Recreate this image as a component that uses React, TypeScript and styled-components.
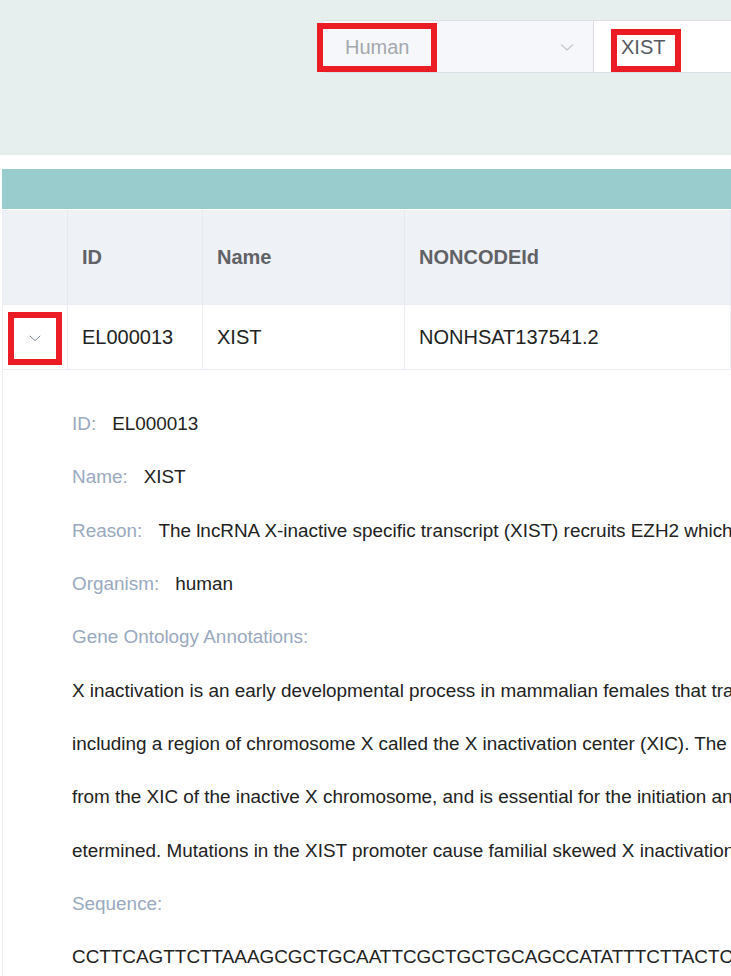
import React from "react";
import styled, { createGlobalStyle } from "styled-components";

const GlobalStyle = createGlobalStyle`
  html, body { margin: 0; padding: 0; background: #ffffff; overflow: hidden; }
  body { font-family: "Liberation Sans", Arial, sans-serif; }
`;

const Page = styled.div`
  width: 731px;
  overflow: hidden;
  white-space: nowrap;
`;

const TopBand = styled.div`
  height: 155px;
  background: #e6efee;
  padding: 20px 0 0 322px;
  box-sizing: border-box;
`;

const SearchGroup = styled.div`
  display: flex;
  height: 53px;
  width: 800px;
  box-sizing: border-box;
  border: 1px solid #dcdfe6;
  border-radius: 4px;
  background: #ffffff;
`;

const SelectPart = styled.div`
  width: 271px;
  flex: none;
  display: flex;
  align-items: center;
  justify-content: space-between;
  box-sizing: border-box;
  padding: 0 18px 0 22px;
  background: #f5f7fa;
  border-right: 1px solid #dcdfe6;
  border-radius: 4px 0 0 4px;
  font-size: 20px;
  color: #a4a8b0;
`;

const InputPart = styled.div`
  flex: 1;
  display: flex;
  align-items: center;
  padding-left: 27px;
  font-size: 20px;
  color: #555a63;
`;

const Marked = styled.span<{ $t: number; $r: number; $b: number; $l: number }>`
  position: relative;
  display: inline-block;
  line-height: 24px;
  &::after {
    content: "";
    position: absolute;
    top: ${(p) => -p.$t}px;
    right: ${(p) => -p.$r}px;
    bottom: ${(p) => -p.$b}px;
    left: ${(p) => -p.$l}px;
    border: 6px solid #ec1c24;
    pointer-events: none;
  }
`;

const Spacer = styled.div`
  height: 14px;
`;

const TableWrap = styled.div`
  margin-left: 2px;
`;

const TealBar = styled.div`
  height: 40px;
  background: #99cccc;
`;

const Table = styled.div`
  margin-top: 1px;
  border-left: 1px solid #ebeef5;
`;

const Row = styled.div<{ $head?: boolean }>`
  display: grid;
  grid-template-columns: 65px 135px 202px 1fr;
  height: ${(p) => (p.$head ? 95 : 65)}px;
  background: ${(p) => (p.$head ? "#eef1f6" : "#ffffff")};
  border-bottom: 1px solid #ebeef5;
  box-sizing: border-box;
`;

const Cell = styled.div<{ $head?: boolean; $center?: boolean }>`
  display: flex;
  align-items: center;
  justify-content: ${(p) => (p.$center ? "center" : "flex-start")};
  padding-left: ${(p) => (p.$center ? 0 : 14)}px;
  border-right: 1px solid ${(p) => (p.$head ? "#e6e9f0" : "#ebeef5")};
  font-size: 20px;
  font-weight: ${(p) => (p.$head ? 700 : 400)};
  color: ${(p) => (p.$head ? "#606266" : "#222222")};
  overflow: hidden;
`;

const Detail = styled.div`
  padding: 27px 0 0 69px;
  font-size: 18.9px;
  line-height: 53.33px;
  color: #222222;
`;

const Line = styled.div``;

const Label = styled.span`
  color: #99a9bf;
  margin-right: 16px;
`;

const Chevron = ({ size, color }: { size: number; color: string }) => (
  <svg width={size} height={size} viewBox="0 0 16 16" fill="none" style={{ display: "block" }}>
    <path d="M2 5.5 L8 11 L14 5.5" stroke={color} strokeWidth="1.1" />
  </svg>
);

const ExpandIcon = styled.span`
  position: relative;
  display: inline-block;
  width: 14px;
  height: 14px;
  margin-top: 2px;
  &::after {
    content: "";
    position: absolute;
    top: -19px;
    right: -20px;
    bottom: -20px;
    left: -20px;
    border: 6px solid #ec1c24;
  }
`;

export default function App() {
  return (
    <Page>
      <GlobalStyle />
      <TopBand>
        <SearchGroup>
          <SelectPart>
            <Marked $t={12} $r={28} $b={13} $l={28}>Human</Marked>
            <Chevron size={16} color="#c0c4cc" />
          </SelectPart>
          <InputPart>
            <Marked $t={6} $r={16} $b={13} $l={10}>XIST</Marked>
          </InputPart>
        </SearchGroup>
      </TopBand>
      <Spacer />
      <TableWrap>
        <TealBar />
        <Table>
          <Row $head>
            <Cell $head $center />
            <Cell $head>ID</Cell>
            <Cell $head>Name</Cell>
            <Cell $head>NONCODEId</Cell>
          </Row>
          <Row>
            <Cell $center>
              <ExpandIcon>
                <Chevron size={14} color="#7a8599" />
              </ExpandIcon>
            </Cell>
            <Cell>EL000013</Cell>
            <Cell>XIST</Cell>
            <Cell>NONHSAT137541.2</Cell>
          </Row>
          <Detail>
            <Line><Label>ID:</Label>EL000013</Line>
            <Line><Label>Name:</Label>XIST</Line>
            <Line>
              <Label>Reason:</Label>The lncRNA X-inactive specific transcript (XIST) recruits EZH2 which mediates H3K27 trimethylation and gene silencing.
            </Line>
            <Line><Label>Organism:</Label>human</Line>
            <Line><Label>Gene Ontology Annotations:</Label></Line>
            <Line>X inactivation is an early developmental process in mammalian females that transcriptionally silences one of the pair of X chromosomes, thus providing dosage equivalence</Line>
            <Line>including a region of chromosome X called the X inactivation center (XIC). The XIC comprises several non-coding and protein-coding genes, and this gene was the first</Line>
            <Line>from the XIC of the inactive X chromosome, and is essential for the initiation and spread of X-inactivation. The transcript is a spliced RNA. Alternatively spliced</Line>
            <Line>etermined. Mutations in the XIST promoter cause familial skewed X inactivation.</Line>
            <Line><Label>Sequence:</Label></Line>
            <Line>CCTTCAGTTCTTAAAGCGCTGCAATTCGCTGCTGCAGCCATATTTCTTACTCTCTCGGGGCTGGAAGCTTCCTGACTGAAGATCGCTCG</Line>
          </Detail>
        </Table>
      </TableWrap>
    </Page>
  );
}
